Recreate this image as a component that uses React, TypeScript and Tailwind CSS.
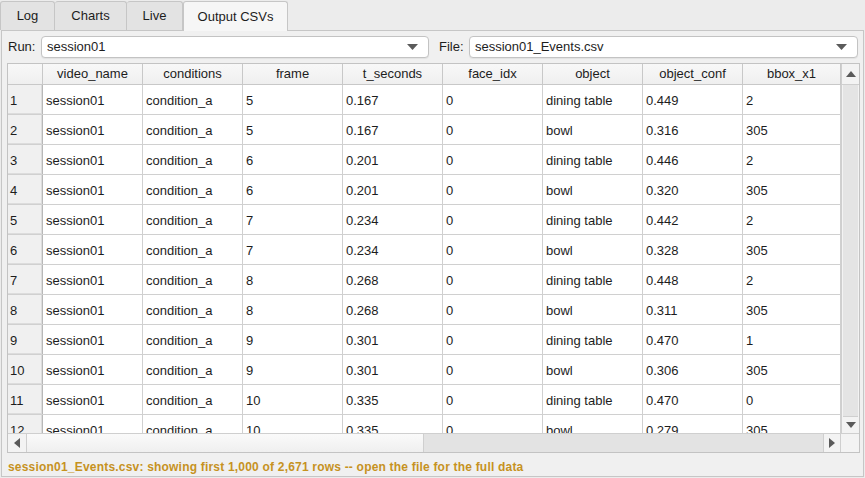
import React from 'react';

const columns = [
  { name: 'video_name', w: 100 },
  { name: 'conditions', w: 100 },
  { name: 'frame', w: 100 },
  { name: 't_seconds', w: 100 },
  { name: 'face_idx', w: 100 },
  { name: 'object', w: 100 },
  { name: 'object_conf', w: 100 },
  { name: 'bbox_x1', w: 98 },
];

const rows = [
  ['5', '0.167', 'dining table', '0.449', '2'],
  ['5', '0.167', 'bowl', '0.316', '305'],
  ['6', '0.201', 'dining table', '0.446', '2'],
  ['6', '0.201', 'bowl', '0.320', '305'],
  ['7', '0.234', 'dining table', '0.442', '2'],
  ['7', '0.234', 'bowl', '0.328', '305'],
  ['8', '0.268', 'dining table', '0.448', '2'],
  ['8', '0.268', 'bowl', '0.311', '305'],
  ['9', '0.301', 'dining table', '0.470', '1'],
  ['9', '0.301', 'bowl', '0.306', '305'],
  ['10', '0.335', 'dining table', '0.470', '0'],
  ['10', '0.335', 'bowl', '0.279', '305'],
];

function Tri({ dir }: { dir: 'up' | 'down' | 'left' | 'right' }) {
  const pts = {
    up: '0,6 5,0 10,6',
    down: '0,0 10,0 5,6',
    left: '6,0 6,10 0,5',
    right: '0,0 0,10 6,5',
  }[dir];
  const vert = dir === 'up' || dir === 'down';
  return (
    <svg width={vert ? 10 : 6} height={vert ? 6 : 10} viewBox={vert ? '0 0 10 6' : '0 0 6 10'}>
      <polygon points={pts} fill="#5a5a5a" />
    </svg>
  );
}

function Combo({ value, className }: { value: string; className: string }) {
  return (
    <div className={`h-[22px] flex items-center justify-between bg-white border border-[#c3c3c3] rounded-[4px] pl-[5px] pr-[10px] shadow-[0_1px_1px_rgba(0,0,0,0.06)] ${className}`}>
      <span className="text-[13px] text-[#1d1d1d]">{value}</span>
      <svg width="11" height="6" viewBox="0 0 11 6">
        <polygon points="0,0 11,0 5.5,6" fill="#5b5b5b" />
      </svg>
    </div>
  );
}

export default function App() {
  const tabs = ['Log', 'Charts', 'Live', 'Output CSVs'];
  const tabW = [55, 72, 56, 105];
  return (
    <div className="w-[865px] h-[478px] bg-[#ececec] overflow-hidden text-[#1d1d1d]" style={{ fontFamily: '"Liberation Sans", Arial, sans-serif' }}>
      {/* tab bar */}
      <div className="flex h-[30px] items-end">
        {tabs.map((t, i) => {
          const sel = i === 3;
          return (
            <div
              key={t}
              style={{ width: tabW[i] }}
              className={`h-[29px] flex items-center justify-center text-[13px] border-t border-r border-[#c6c6c6] rounded-t-[3px] ${
                sel ? 'bg-[#f6f6f6] h-[30px] border-l -mb-px relative z-10' : 'bg-[#e3e3e3]'
              } ${i === 0 ? 'border-l' : ''}`}
            >
              {t}
            </div>
          );
        })}
      </div>

      {/* pane */}
      <div className="mx-[1px] h-[447px] border border-[#c6c6c6] bg-[#f0f0f0] px-[5px] pt-[5px] flex flex-col">
        <div className="flex items-center h-[22px]">
          <span className="text-[13px] w-[34px] pl-[1px]">Run:</span>
          <Combo value="session01" className="w-[389px]" />
          <span className="text-[13px] ml-[10px] w-[30px]">File:</span>
          <Combo value="session01_Events.csv" className="w-[390px]" />
        </div>

        {/* table */}
        <div className="mt-[5px] w-[853px] h-[390px] border border-[#c3c3c3] bg-white flex flex-col">
          <div className="flex flex-1 min-h-0">
            <div className="flex-1 overflow-hidden">
              {/* header */}
              <div className="flex h-[21px] border-b border-[#c8c8c8] bg-gradient-to-b from-[#f8f8f8] to-[#efefef]">
                <div className="w-[35px] shrink-0 border-r border-[#c8c8c8]" />
                {columns.map((c) => (
                  <div
                    key={c.name}
                    style={{ width: c.w }}
                    className="shrink-0 border-r border-[#c8c8c8] flex items-center justify-center text-[13px]"
                  >
                    {c.name}
                  </div>
                ))}
              </div>
              {rows.map((r, i) => (
                <div key={i} className="flex h-[30px] border-b border-[#d0d0d0]">
                  <div className="w-[35px] shrink-0 bg-[#f0f0f0] border-r border-[#b8b8b8] flex items-center pl-[2px] pt-[3px] text-[13px] shadow-[inset_-1px_-1px_0_#dcdcdc]">
                    {i + 1}
                  </div>
                  {['session01', 'condition_a', r[0], r[1], '0', r[2], r[3], r[4]].map((v, j) => (
                    <div
                      key={j}
                      style={{ width: columns[j].w }}
                      className="shrink-0 border-r border-[#d0d0d0] flex items-center pl-[3px] pt-[3px] text-[13px]"
                    >
                      {v}
                    </div>
                  ))}
                </div>
              ))}
            </div>
            {/* vertical scrollbar */}
            <div className="w-[18px] shrink-0 flex flex-col border-l border-[#cfcfcf] bg-[#f3f3f3]">
              <div className="h-[21px] flex items-center justify-center border-b border-[#cfcfcf]">
                <Tri dir="up" />
              </div>
              <div className="flex-1 bg-[#e4e4e4] border-b border-[#cfcfcf] mx-[1px]" />
              <div className="h-[16px] flex items-center justify-center">
                <Tri dir="down" />
              </div>
            </div>
          </div>
          {/* horizontal scrollbar */}
          <div className="h-[19px] flex border-t border-[#cfcfcf] bg-[#f3f3f3]">
            <div className="w-[18px] flex items-center justify-center">
              <Tri dir="left" />
            </div>
            <div className="w-[398px] bg-gradient-to-b from-[#fafafa] to-[#efefef] border-x border-[#cfcfcf]" />
            <div className="w-[399px] bg-[#e3e3e3]" />
            <div className="w-[17px] flex items-center justify-center border-l border-[#cfcfcf]">
              <Tri dir="right" />
            </div>
            <div className="flex-1 border-l border-[#cfcfcf]" />
          </div>
        </div>

        <div className="mt-[6px] text-[12px] leading-[16px] tracking-[0.2px] font-bold text-[#c6921f] pl-[1px]">
          session01_Events.csv: showing first 1,000 of 2,671 rows -- open the file for the full data
        </div>
      </div>
    </div>
  );
}
